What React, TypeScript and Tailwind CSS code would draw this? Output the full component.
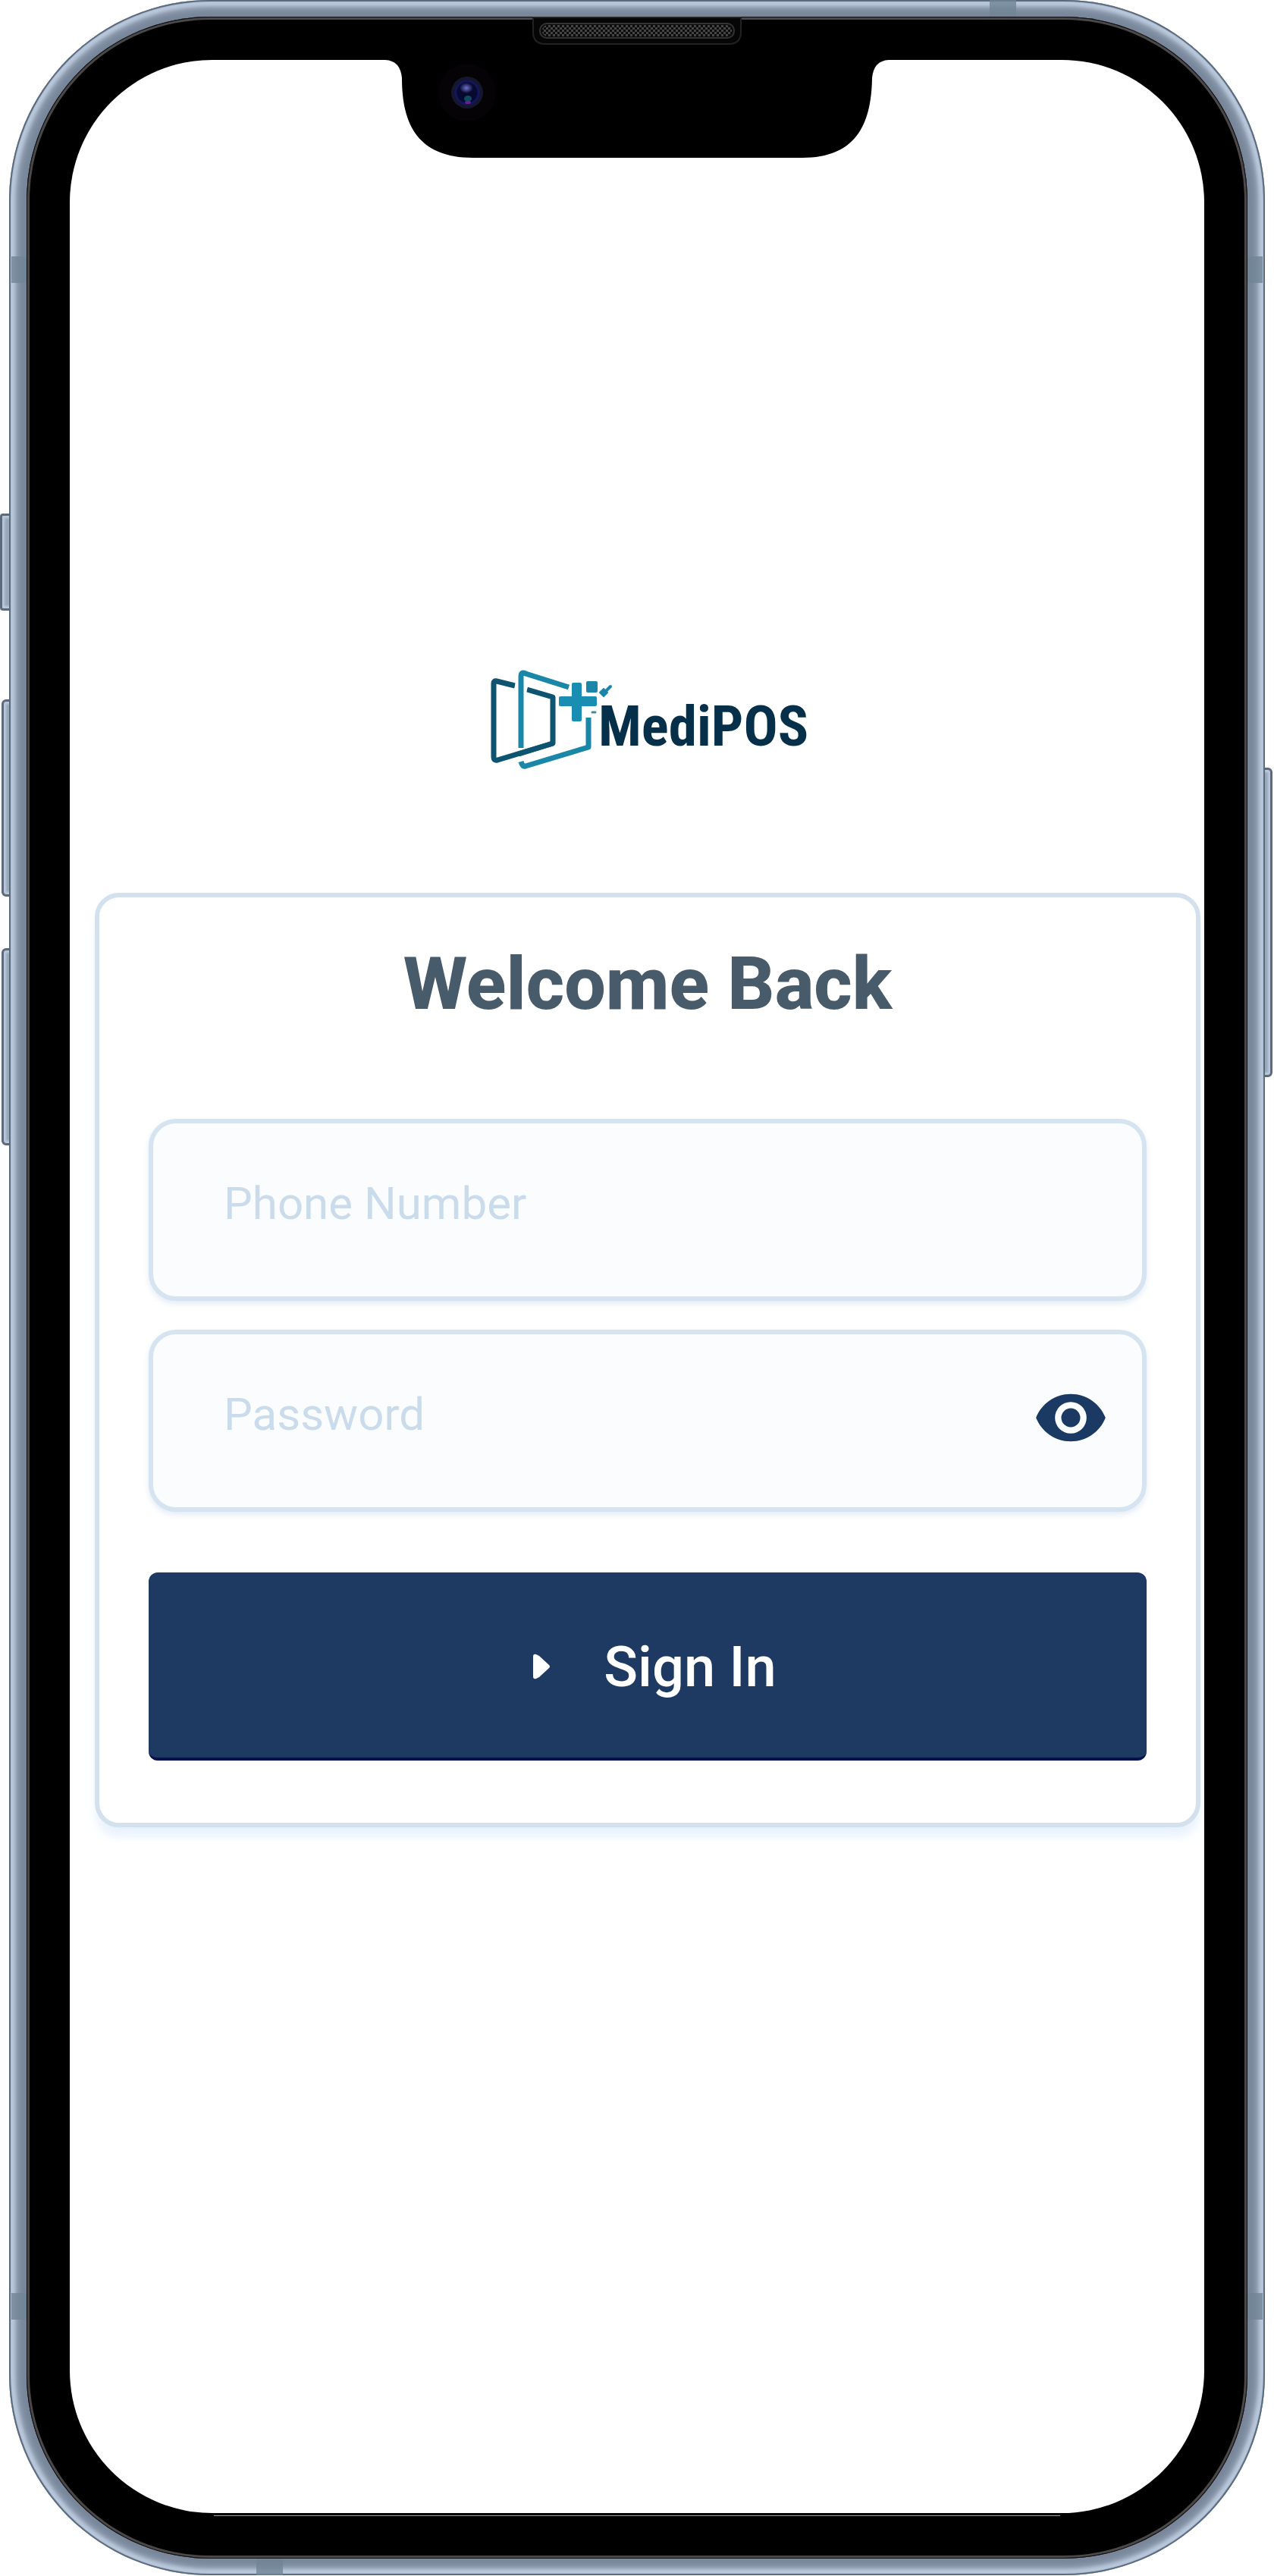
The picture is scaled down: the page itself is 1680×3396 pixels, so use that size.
import { useState } from "react";

function LogoMark() {
  return (
    <svg viewBox="0 0 164 136" className="h-[136px] w-[164px] shrink-0" fill="none" strokeLinejoin="round" aria-hidden="true">
      <path d="M32 21 8 15Q4 14 4 18V115Q4 120 9 119L82 97V36L48 26" stroke="#0c5470" strokeWidth="7" />
      <path d="M40 103V10Q40 2 46 5L104 24" stroke="#fff" strokeWidth="15" />
      <path d="M40 103V9Q40 2 46 5L103 23M129 63V102L46 127Q42 128 40 121" stroke="#1a86a8" strokeWidth="7" />
      <path d="M37 111 82 97" stroke="#0c5470" strokeWidth="7" />
      <rect x="107" y="17" width="13" height="51" rx="2" fill="#1a8db3" />
      <rect x="90" y="35" width="50" height="13" rx="2" fill="#1a8db3" />
      <rect x="126" y="15" width="15" height="15" rx="2" fill="#1a86a8" />
      <path d="m149 25 5 5-5 5-5-5z" fill="#1a86a8" stroke="#1a86a8" strokeWidth="2" />
      <path d="m153 27 5-5" stroke="#1a86a8" strokeWidth="4" strokeLinecap="round" />
      <path d="M134 56h4" stroke="#4a8799" strokeWidth="3" strokeLinecap="round" />
    </svg>
  );
}

function Notch() {
  return (
    <div className="absolute inset-x-0 top-0 flex justify-center" aria-hidden="true">
      <svg viewBox="0 0 672 210" className="h-[210px] w-[672px]" fill="none">
        <defs>
          <pattern id="mesh" width="6" height="6" patternUnits="userSpaceOnUse">
            <path d="M0 0h3v3H0zM3 3h3v3H3z" fill="#454545" />
          </pattern>
          <radialGradient id="lens">
            <stop offset="0" stopColor="#07082a" />
            <stop offset="0.6" stopColor="#080930" />
            <stop offset="0.72" stopColor="#121770" />
            <stop offset="0.8" stopColor="#15172f" />
            <stop offset="1" stopColor="#14162a" />
          </radialGradient>
          <radialGradient id="glint">
            <stop offset="0" stopColor="#7072d0" />
            <stop offset="1" stopColor="#7072d0" stopOpacity="0" />
          </radialGradient>
        </defs>
        <path d="M0 79H4Q24 80 26 103C26 165 48 208 120 208H554C624 208 645 165 646 103Q648 80 668 79H672V40H0Z" fill="#000" />
        <path d="M199 23H473V42Q473 58 457 58H215Q199 58 199 42Z" fill="#060606" stroke="#222" strokeWidth="2" />
        <rect x="208" y="31" width="256" height="19" rx="9" fill="#0c0c0c" stroke="#333" strokeWidth="2" />
        <rect x="211" y="33" width="250" height="15" rx="7" fill="url(#mesh)" />
        <circle cx="112" cy="122" r="38" fill="#060306" />
        <circle cx="112" cy="122" r="21" fill="url(#lens)" />
        <ellipse cx="111" cy="116" rx="9" ry="7" fill="url(#glint)" />
        <ellipse cx="113" cy="130" rx="5" ry="4" fill="#0f4a60" />
        <ellipse cx="113" cy="135" rx="4" ry="2" fill="#6a1f88" />
      </svg>
    </div>
  );
}

const sideButton =
  "absolute border-[3px] border-[#5b6b7d] bg-[#98a8bc] shadow-[inset_0_0_3px_3px_#bccadc]";
const band = "absolute bg-[#6f8495]/80";

export default function App() {
  const [visible, setVisible] = useState(false);

  return (
    <main className="relative flex min-h-screen flex-col bg-white px-3 pb-px font-[Roboto,sans-serif]">
      <div className={`${sideButton} left-0 top-[677px] h-32 w-5 rounded-l-sm`} />
      <div className={`${sideButton} left-0.5 top-[922px] h-[260px] w-5 rounded-l-md`} />
      <div className={`${sideButton} left-0.5 top-[1250px] h-[260px] w-5 rounded-l-md`} />
      <div className={`${sideButton} right-0.5 top-[1012px] h-[408px] w-5 rounded-r-md`} />

      <div className="relative flex flex-1 flex-col rounded-[265px] bg-[#78869a] px-[23px] py-[22px] shadow-[inset_0_0_1px_2px_#56677a,inset_0_0_4px_8px_#bac8db,inset_0_0_8px_12px_#97a5b9]">
        <div className={`${band} left-[3px] top-[338px] h-[35px] w-5`} />
        <div className={`${band} right-[3px] top-[338px] h-[35px] w-5`} />
        <div className={`${band} bottom-[337px] left-[3px] h-[35px] w-5`} />
        <div className={`${band} bottom-[337px] right-[3px] h-[35px] w-5`} />
        <div className={`${band} right-[328px] top-0 h-[22px] w-[35px]`} />
        <div className={`${band} bottom-0 left-[326px] h-[22px] w-[35px]`} />

        <div className="flex flex-1 flex-col rounded-[242px] bg-black p-[57px] pb-[60px] shadow-[inset_0_0_0_1px_#0a0d12,inset_0_0_0_4px_#4b4847]">
          <div className="flex flex-1 flex-col overflow-hidden rounded-[188px] bg-white pl-[33px] pr-[5px] pt-[804px]">
            <header className="flex items-center pl-[522px]">
              <LogoMark />
              <span className="-ml-[22px] mt-3 font-['Liberation_Sans_Narrow','Roboto_Condensed',Roboto,sans-serif] text-[75px] font-bold leading-[76px] text-[#06304a]">
                MediPOS
              </span>
            </header>

            <form
              onSubmit={(e) => e.preventDefault()}
              className="mt-[158px] flex flex-col rounded-[32px] border-[6px] border-[#d3e0ee] bg-white px-[65px] pb-[82px] pt-[54px] shadow-[0_14px_14px_-2px_#e8f1fc]"
            >
              <h1 className="text-center text-[97px] font-extrabold leading-[120px] text-[#475b6b]">Welcome Back</h1>

              <div className="mt-[118px] flex h-[240px] items-center rounded-[36px] border-[6px] border-[#d5e4f0] bg-[#fafcfe] px-[93px] shadow-[0_4px_8px_#e4ebf5]">
                <input
                  type="tel"
                  aria-label="Phone Number"
                  placeholder="Phone Number"
                  className="h-[90px] min-w-0 flex-1 bg-transparent pb-4 text-[60px] text-[#1e3a62] outline-none placeholder:text-[#cadcec]"
                />
              </div>

              <div className="mt-[38px] flex h-[240px] items-center rounded-[36px] border-[6px] border-[#d5e4f0] bg-[#fafcfe] pl-[93px] pr-11 shadow-[0_4px_8px_#e4ebf5]">
                <input
                  type={visible ? "text" : "password"}
                  aria-label="Password"
                  placeholder="Password"
                  className="h-[90px] min-w-0 flex-1 bg-transparent pb-4 text-[60px] text-[#1e3a62] outline-none placeholder:text-[#cadcec]"
                />
                <button type="button" aria-label="Show password" onClick={() => setVisible(!visible)} className="mb-2">
                  <svg viewBox="0 0 24 24" className="size-[100px]" fill="#1a3a63" aria-hidden="true">
                    <path d="M12 4.5C7 4.5 2.7 7.6 1 12c1.7 4.4 6 7.5 11 7.5s9.300-3.100 11-7.500c-1.700-4.400-6-7.500-11-7.500zM12 17a5 5 0 1 1 0-10 5 5 0 0 1 0 10zm0-8a3 3 0 1 0 0 6 3 3 0 0 0 0-6z" />
                  </svg>
                </button>
              </div>

              <button
                type="submit"
                className="mt-20 flex h-[248px] items-center justify-center gap-[70px] rounded-xl border-b-4 border-[#031347] bg-[#1e3a62] pl-[18px] pt-1 text-[74px] font-medium text-white"
              >
                <svg viewBox="0 0 24 34" className="h-[34px] w-6" fill="#fff" aria-hidden="true">
                  <path d="M1 4Q1 0 5 1L9 3 22 15Q24 17 22 19L9 31 5 33Q1 34 1 30Z" />
                </svg>
                <span>Sign In</span>
              </button>
            </form>
          </div>
        </div>
        <div className="absolute inset-x-[270px] bottom-[78px] h-px bg-[#a0a0a0]" />
        <Notch />
      </div>
    </main>
  );
}
